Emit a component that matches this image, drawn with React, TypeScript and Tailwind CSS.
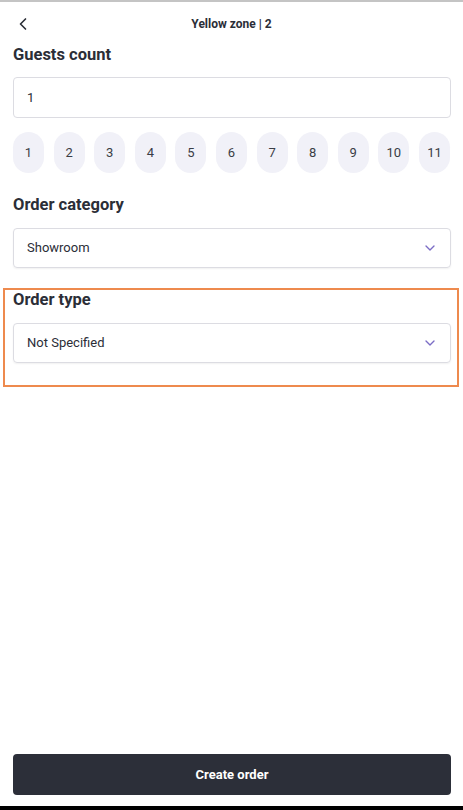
import { ChevronLeft, ChevronDown } from "lucide-react"

const counts = [1, 2, 3, 4, 5, 6, 7, 8, 9, 10, 11]

function Select({ value }: { value: string }) {
    return (
        <div className="mt-[13px] flex h-[40px] items-center justify-between rounded-[4px] border border-[#dcdce2] pl-[13px] pr-[12px] shadow-[0_1px_2px_rgba(0,0,0,0.06)]">
            <span className="text-[13px] text-[#2b2e37]">{value}</span>
            <ChevronDown className="h-[16px] w-[16px] text-[#7b6dc5]" strokeWidth={2} />
        </div>
    )
}

export default function App() {
    return (
        <div className="flex min-h-[810px] flex-col bg-white font-['Roboto',sans-serif] text-[#2b2e37]">
            {/* status line */}
            <div className="h-[2px] bg-[#c4c4c4]" />

            {/* Header */}
            <div className="relative flex h-[43px] items-center justify-center">
                <ChevronLeft className="absolute left-[13px] top-[12px] h-[20px] w-[20px] text-[#2b2e37]" strokeWidth={2} />
                <span className="text-[12px] font-bold">Yellow zone | 2</span>
            </div>

            <div className="flex flex-1 flex-col px-[13px]">
                <h2 className="text-[16.5px] font-bold leading-[20px]">Guests count</h2>
                <div className="mt-[12px] mr-[-1px] flex h-[41px] items-center rounded-[4px] border border-[#dcdce2] px-[13px]">
                    <span className="text-[13px]">1</span>
                </div>

                <div className="mt-[14px] flex justify-between">
                    {counts.map(n => (
                        <div
                            key={n}
                            className="flex h-[41px] w-[31px] items-center justify-center rounded-full bg-[#f1f1f8] text-[13px] text-[#3a3d46]"
                        >
                            {n}
                        </div>
                    ))}
                </div>

                <h2 className="mt-[22px] text-[16.5px] font-bold leading-[20px]">Order category</h2>
                <div className="mr-[-1px]">
                    <Select value="Showroom" />
                </div>

                {/* highlighted block */}
                <div className="ml-[-10px] mr-[-9px] mt-[20px] border-2 border-[#ee8a4e] pb-[22px] pl-[8px] pr-[6px]">
                    <h2 className="text-[16.5px] font-bold leading-[20px]">Order type</h2>
                    <Select value="Not Specified" />
                </div>

                <div className="flex-1" />

                <button className="mb-[11px] mr-[-1px] flex h-[41px] items-center justify-center rounded-[4px] bg-[#2c2f39] text-[13px] font-bold text-white">
                    Create order
                </button>
            </div>

            <div className="h-[4px] bg-black" />
        </div>
    )
}
